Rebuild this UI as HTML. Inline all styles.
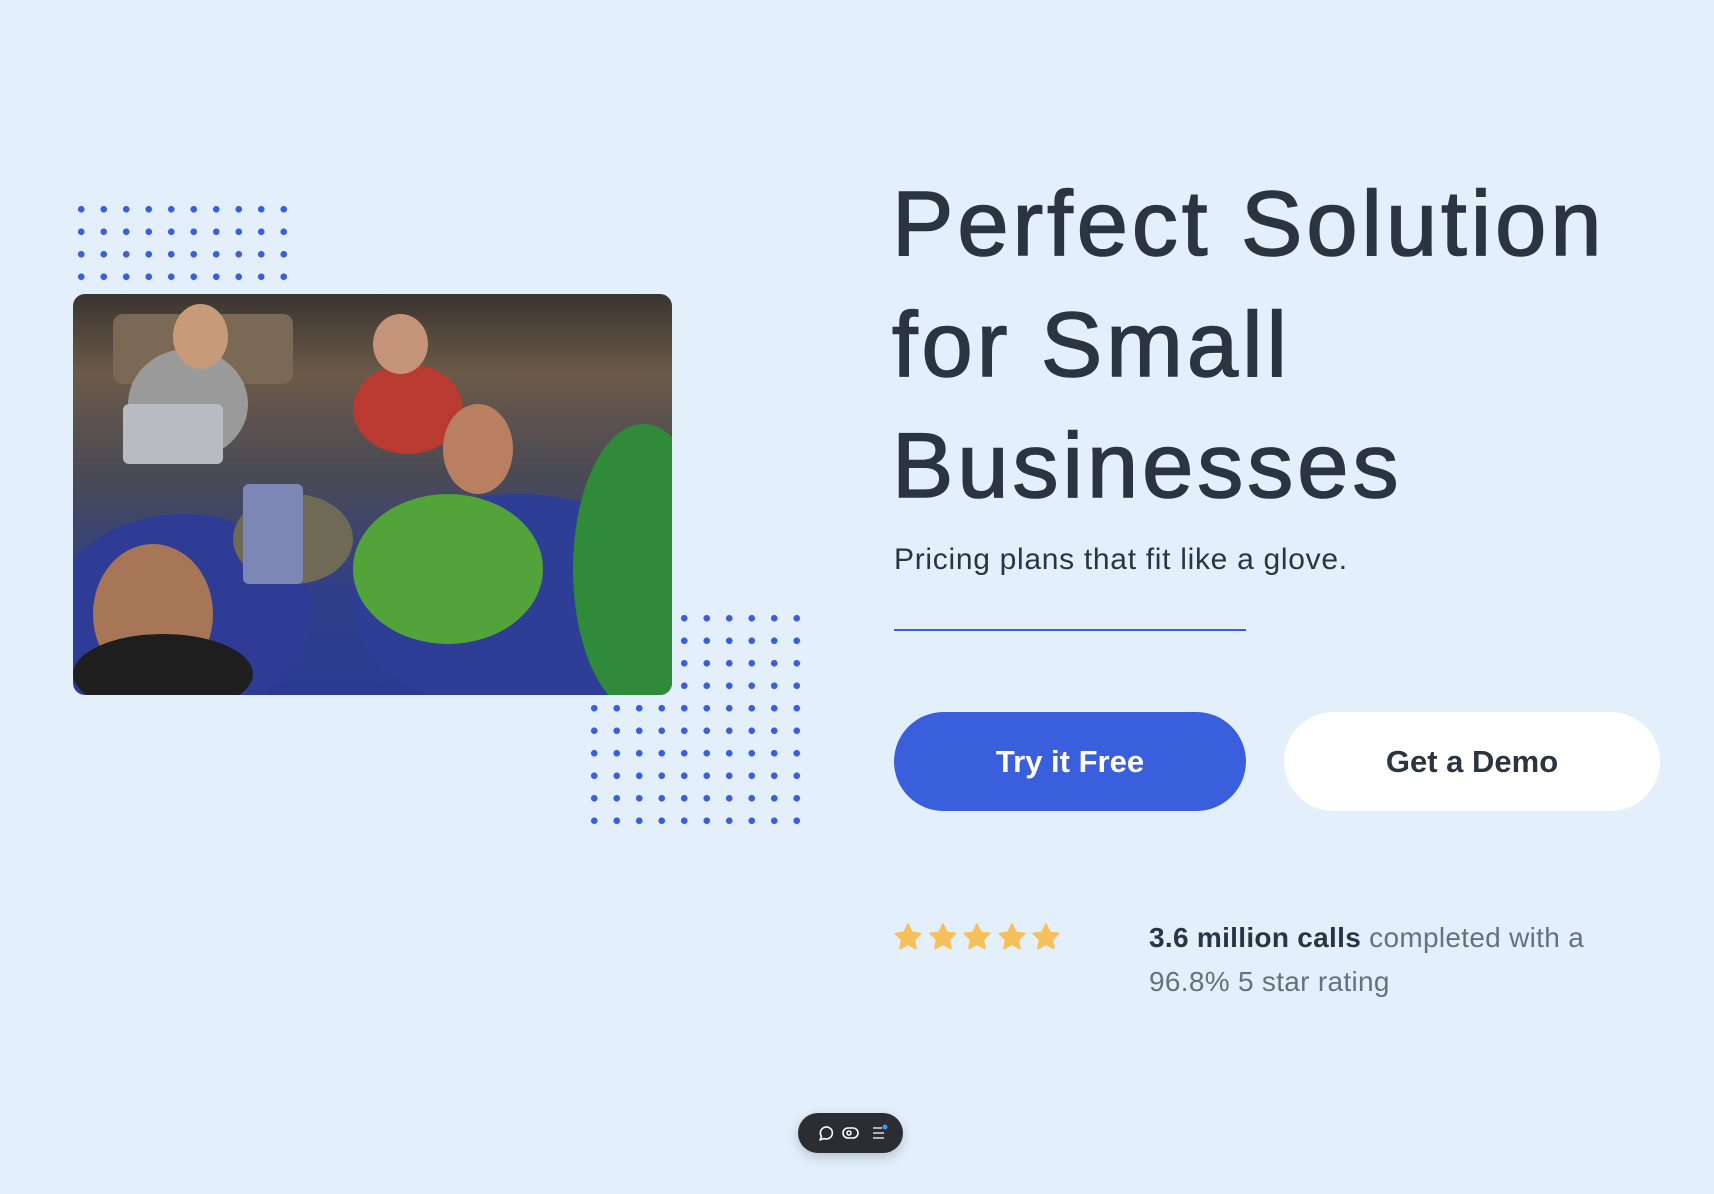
<!DOCTYPE html>
<html><head><meta charset="utf-8"><style>
html,body{margin:0;padding:0;}
body{width:1714px;height:1194px;background:#e3f0fc;position:relative;overflow:hidden;font-family:"Liberation Sans",sans-serif;}
.dots{position:absolute;background-image:radial-gradient(circle,#3a5fdd 3px,transparent 3.6px);background-size:22.5px 22.5px;}
.img{position:absolute;left:73px;top:294px;width:599px;height:401px;border-radius:12px;overflow:hidden;
background:linear-gradient(180deg,#3a3530 0%,#6b5a48 20%,#4a4a55 45%,#2f3f8a 75%,#2a3a90 100%);}
.img div{position:absolute;border-radius:50%;}
h1{position:absolute;left:892px;top:164px;margin:0;font-size:92px;line-height:121px;font-weight:400;color:#2b3540;letter-spacing:4px;-webkit-text-stroke:1.6px #2b3540;}
.sub{position:absolute;left:894px;top:543px;font-size:30px;color:#2b3540;letter-spacing:0.7px;}
.line{position:absolute;left:894px;top:629px;width:352px;height:2px;background:#3a5fdd;}
.btn{position:absolute;top:712px;height:99px;border-radius:50px;display:flex;align-items:center;justify-content:center;font-size:31px;font-weight:700;}
.b1{left:894px;width:352px;background:#3a5fdd;color:#fff;}
.b2{left:1284px;width:376px;background:#fff;color:#2b3540;}
.stars{position:absolute;left:893px;top:922px;display:flex;}
.stars svg{width:30px;height:30px;margin-right:4.5px;}
.rt{position:absolute;left:1149px;top:916px;font-size:28px;line-height:44px;color:#66717d;letter-spacing:0.3px;}
.rt b{color:#2b3540;font-weight:700;}
.tb{position:absolute;left:798px;top:1113px;width:105px;height:40px;border-radius:20px;background:#2b2d30;box-shadow:0 4px 12px rgba(0,0,0,.2);}
</style></head><body>
<div class="dots" style="left:70px;top:198px;width:225px;height:90px;"></div>
<div class="dots" style="left:673px;top:607px;width:135px;height:90px;"></div>
<div class="dots" style="left:583px;top:697px;width:225px;height:135px;"></div>
<div class="img">
<div style="left:-20px;top:220px;width:260px;height:200px;background:#2f3c95;"></div>
<div style="left:280px;top:200px;width:330px;height:220px;background:#2e3d96;"></div>
<div style="left:40px;top:20px;width:180px;height:70px;background:#7a6a55;border-radius:10px;"></div>
<div style="left:55px;top:55px;width:120px;height:110px;background:#9a9a9a;"></div>
<div style="left:100px;top:10px;width:55px;height:65px;background:#c79b7a;"></div>
<div style="left:280px;top:70px;width:110px;height:90px;background:#b83a30;"></div>
<div style="left:300px;top:20px;width:55px;height:60px;background:#c59478;"></div>
<div style="left:500px;top:130px;width:140px;height:290px;background:#2f8a3a;"></div>
<div style="left:280px;top:200px;width:190px;height:150px;background:#52a33a;"></div>
<div style="left:370px;top:110px;width:70px;height:90px;background:#b88060;"></div>
<div style="left:50px;top:110px;width:100px;height:60px;background:#b8bcc2;border-radius:6px;"></div>
<div style="left:160px;top:200px;width:120px;height:90px;background:#6e6a55;"></div>
<div style="left:20px;top:250px;width:120px;height:140px;background:#a77656;"></div>
<div style="left:0px;top:340px;width:180px;height:80px;background:#1e1e1e;"></div>
<div style="left:170px;top:190px;width:60px;height:100px;background:#7d87b5;border-radius:6px;"></div>
</div>
<h1>Perfect Solution<br>for Small<br>Businesses</h1>
<div class="sub">Pricing plans that fit like a glove.</div>
<div class="line"></div>
<div class="btn b1">Try it Free</div>
<div class="btn b2">Get a Demo</div>
<div class="stars">
<svg viewBox="0 0 24 24"><path d="M12 1.8l3.1 6.5 7 .9-5.1 4.9 1.3 7-6.3-3.4-6.3 3.4 1.3-7L1.9 9.2l7-.9z" fill="#f7c05a" stroke="#f7c05a" stroke-linejoin="round" stroke-width="1.5"/></svg>
<svg viewBox="0 0 24 24"><path d="M12 1.8l3.1 6.5 7 .9-5.1 4.9 1.3 7-6.3-3.4-6.3 3.4 1.3-7L1.9 9.2l7-.9z" fill="#f7c05a" stroke="#f7c05a" stroke-linejoin="round" stroke-width="1.5"/></svg>
<svg viewBox="0 0 24 24"><path d="M12 1.8l3.1 6.5 7 .9-5.1 4.9 1.3 7-6.3-3.4-6.3 3.4 1.3-7L1.9 9.2l7-.9z" fill="#f7c05a" stroke="#f7c05a" stroke-linejoin="round" stroke-width="1.5"/></svg>
<svg viewBox="0 0 24 24"><path d="M12 1.8l3.1 6.5 7 .9-5.1 4.9 1.3 7-6.3-3.4-6.3 3.4 1.3-7L1.9 9.2l7-.9z" fill="#f7c05a" stroke="#f7c05a" stroke-linejoin="round" stroke-width="1.5"/></svg>
<svg viewBox="0 0 24 24"><path d="M12 1.8l3.1 6.5 7 .9-5.1 4.9 1.3 7-6.3-3.4-6.3 3.4 1.3-7L1.9 9.2l7-.9z" fill="#f7c05a" stroke="#f7c05a" stroke-linejoin="round" stroke-width="1.5"/></svg>
</div>
<div class="rt"><b>3.6 million calls</b> completed with a<br>96.8% 5 star rating</div>
<div class="tb">
<svg width="105" height="40" viewBox="0 0 105 40">
<path d="M22 27l1.5-3.5A6 6 0 1 1 26 25.5z" fill="none" stroke="#fff" stroke-width="1.6" stroke-linejoin="round"/>
<rect x="45" y="15" width="15" height="10" rx="5" fill="none" stroke="#fff" stroke-width="1.6"/>
<circle cx="51" cy="20" r="2" fill="none" stroke="#fff" stroke-width="1.5"/>
<path d="M75 15h9M75 20h11M75 25h11" stroke="#ddd" stroke-width="1.6"/>
<circle cx="87" cy="14" r="2.5" fill="#4a90f0"/>
</svg>
</div>
</body></html>
